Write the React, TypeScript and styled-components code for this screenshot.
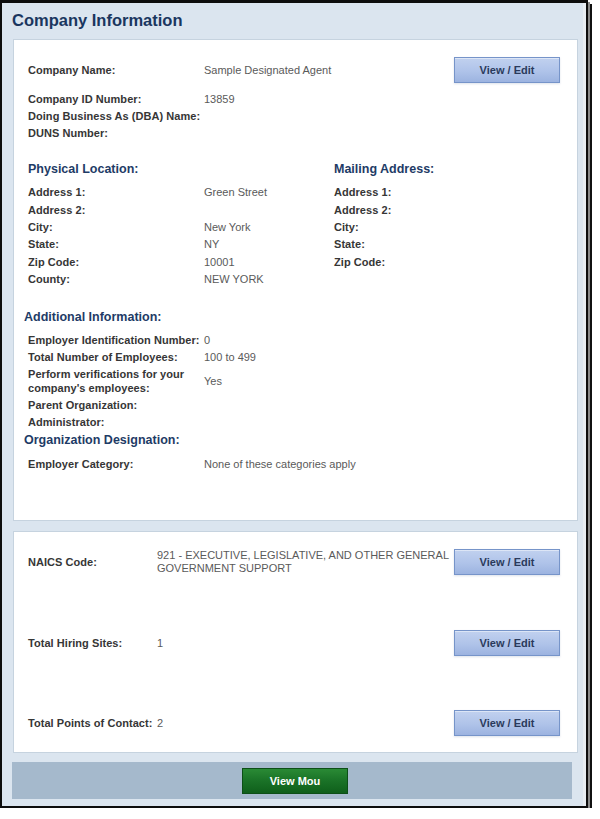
import React from "react";
import styled, { createGlobalStyle } from "styled-components";

const GlobalStyle = createGlobalStyle`
  html, body { margin: 0; padding: 0; background: #ffffff; }
  body { font-family: "Liberation Sans", Arial, sans-serif; }
  * { box-sizing: border-box; }
`;

const FONT = `"Liberation Sans", Arial, Helvetica, sans-serif`;

const Frame = styled.div`
  width: 588px;
  height: 808px;
  border-top: 3px solid #0d0d0d;
  border-left: 2px solid #0d0d0d;
  border-right: 2px solid #0d0d0d;
  border-bottom: 2px solid #0d0d0d;
  box-shadow: 2px 2px 0 #8a8a8a, 4px 4px 0 #111111;
  background: #dbe5ef;
  display: flex;
  flex-direction: column;
  font-family: ${FONT};
`;

const Inner = styled.div`
  flex: 1;
  display: flex;
  flex-direction: column;
  border-right: 3px solid #e8edf2;
`;

const Title = styled.h1`
  margin: 0;
  padding: 7px 0 9px 10px;
  font-size: 16.5px;
  line-height: 20px;
  font-weight: 700;
  color: #1a365f;
`;

const Panel = styled.section<{ $h: number; $mt?: number }>`
  margin: ${(p) => p.$mt ?? 0}px 0 0 11px;
  width: 565px;
  height: ${(p) => p.$h}px;
  background: #ffffff;
  border: 1px solid #c6d3df;
  padding: 16px 17px 0 14px;
  display: flex;
  flex-direction: column;
`;

const ActionRow = styled.div<{ $label: number; $mt?: number }>`
  display: grid;
  grid-template-columns: ${(p) => p.$label}px 1fr 106px;
  align-items: center;
  min-height: 26px;
  margin-top: ${(p) => p.$mt ?? 0}px;
`;

const Group = styled.div<{ $mt: number }>`
  margin-top: ${(p) => p.$mt}px;
  display: flex;
  flex-direction: column;
`;

const Row = styled.div<{ $h?: number }>`
  display: grid;
  grid-template-columns: 176px 1fr;
  align-items: center;
  padding: 1.5px 0;
  min-height: ${(p) => p.$h ?? 17}px;
`;

const Label = styled.div`
  font-size: 11px;
  line-height: 14px;
  font-weight: 700;
  color: #363636;
  letter-spacing: 0.05px;
`;

const NoWrapLabel = styled(Label)`
  white-space: nowrap;
`;

const Value = styled.div<{ $lh?: number }>`
  font-size: 11px;
  line-height: ${(p) => p.$lh ?? 14}px;
  color: #5a5a5a;
`;

const Heading = styled.h2<{ $indent?: number; $mt: number }>`
  margin: ${(p) => p.$mt}px 0 0 ${(p) => p.$indent ?? 0}px;
  font-size: 12.5px;
  line-height: 18px;
  font-weight: 700;
  color: #1e3b66;
`;

const AddressGrid = styled.div`
  display: grid;
  grid-template-columns: 306px 1fr;
  margin-top: 18.5px;
`;

const Column = styled.div`
  display: flex;
  flex-direction: column;
`;

const SimpleRow = styled.div`
  display: flex;
  align-items: center;
  padding: 1.5px 0;
  min-height: 17.4px;
`;

const EditButton = styled.button`
  width: 106px;
  height: 26px;
  padding: 0;
  border: 1px solid #7694c9;
  background: linear-gradient(#c1d1ef 0%, #afc3e9 55%, #9cb3e0 100%);
  box-shadow: inset 0 1px 0 rgba(255, 255, 255, 0.45), 0 1px 2px rgba(120, 140, 170, 0.25);
  font-family: ${FONT};
  font-size: 11px;
  font-weight: 700;
  color: #2a3a5c;
  cursor: pointer;
`;

const ContactRows = styled.div`
  display: flex;
  flex-direction: column;
  gap: 54.5px;
  margin-top: 1px;
`;

const Footer = styled.div`
  margin: 9px 0 0 10px;
  width: 560px;
  height: 37px;
  background: #a5b9cc;
  display: flex;
  align-items: center;
  justify-content: center;
`;

const MouButton = styled.button`
  width: 106px;
  height: 26px;
  margin-left: 6px;
  padding: 0;
  border: 1px solid #0c4f17;
  background: linear-gradient(#2a8a35 0%, #1b7428 45%, #0f5f1b 100%);
  font-family: ${FONT};
  font-size: 11px;
  font-weight: 700;
  color: #ffffff;
  cursor: pointer;
`;

const physical: [string, string][] = [
  ["Address 1:", "Green Street"],
  ["Address 2:", ""],
  ["City:", "New York"],
  ["State:", "NY"],
  ["Zip Code:", "10001"],
  ["County:", "NEW YORK"],
];

const mailing = ["Address 1:", "Address 2:", "City:", "State:", "Zip Code:"];

export default function App() {
  return (
    <>
      <GlobalStyle />
      <Frame>
        <Inner>
          <Title>Company Information</Title>

          <Panel $h={482}>
            <ActionRow $label={176} $mt={1}>
              <Label>Company Name:</Label>
              <Value>Sample Designated Agent</Value>
              <EditButton>View / Edit</EditButton>
            </ActionRow>

            <Group $mt={7.5}>
              <Row>
                <Label>Company ID Number:</Label>
                <Value>13859</Value>
              </Row>
              <Row>
                <NoWrapLabel>Doing Business As (DBA) Name:</NoWrapLabel>
                <Value />
              </Row>
              <Row>
                <Label>DUNS Number:</Label>
                <Value />
              </Row>
            </Group>

            <AddressGrid>
              <Column>
                <Heading $mt={0}>Physical Location:</Heading>
                <Group $mt={5.5}>
                  {physical.map(([l, v]) => (
                    <Row key={l} $h={17.4}>
                      <Label>{l}</Label>
                      <Value>{v}</Value>
                    </Row>
                  ))}
                </Group>
              </Column>
              <Column>
                <Heading $mt={0}>Mailing Address:</Heading>
                <Group $mt={5.5}>
                  {mailing.map((l) => (
                    <SimpleRow key={l}>
                      <Label>{l}</Label>
                    </SimpleRow>
                  ))}
                </Group>
              </Column>
            </AddressGrid>

            <Heading $mt={20} $indent={-4}>Additional Information:</Heading>
            <Group $mt={5.5}>
              <Row>
                <NoWrapLabel>Employer Identification Number:</NoWrapLabel>
                <Value>0</Value>
              </Row>
              <Row>
                <Label>Total Number of Employees:</Label>
                <Value>100 to 499</Value>
              </Row>
              <Row>
                <Label>Perform verifications for your company's employees:</Label>
                <Value>Yes</Value>
              </Row>
              <Row>
                <Label>Parent Organization:</Label>
                <Value />
              </Row>
              <Row>
                <Label>Administrator:</Label>
                <Value />
              </Row>
            </Group>

            <Heading $mt={0.5} $indent={-4}>Organization Designation:</Heading>
            <Group $mt={6.5}>
              <Row>
                <Label>Employer Category:</Label>
                <Value>None of these categories apply</Value>
              </Row>
            </Group>
          </Panel>

          <Panel $h={222} $mt={10}>
            <ContactRows>
              <ActionRow $label={129}>
                <Label>NAICS Code:</Label>
                <Value $lh={13}>921 - EXECUTIVE, LEGISLATIVE, AND OTHER GENERAL GOVERNMENT SUPPORT</Value>
                <EditButton>View / Edit</EditButton>
              </ActionRow>
              <ActionRow $label={129}>
                <Label>Total Hiring Sites:</Label>
                <Value>1</Value>
                <EditButton>View / Edit</EditButton>
              </ActionRow>
              <ActionRow $label={129}>
                <NoWrapLabel>Total Points of Contact:</NoWrapLabel>
                <Value>2</Value>
                <EditButton>View / Edit</EditButton>
              </ActionRow>
            </ContactRows>
          </Panel>

          <Footer>
            <MouButton>View Mou</MouButton>
          </Footer>
        </Inner>
      </Frame>
    </>
  );
}
